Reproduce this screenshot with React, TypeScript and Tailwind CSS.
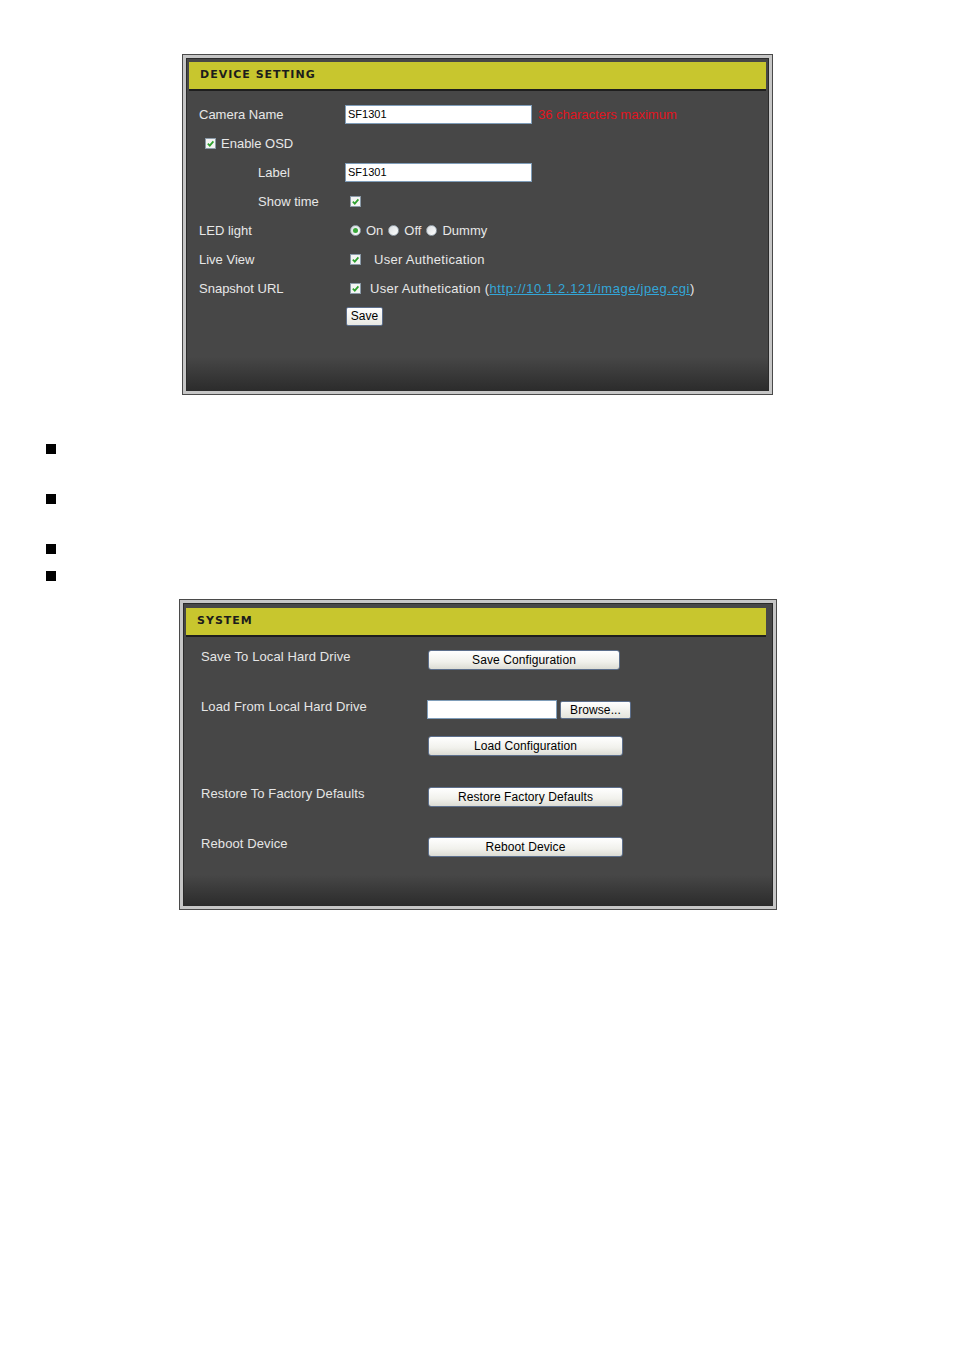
import type { ReactNode } from 'react'

// ─── Small widgets ────────────────────────────────────────────────────────────

function CheckBox() {
  return (
    <span className="inline-flex h-[11px] w-[11px] flex-none items-center justify-center border border-[#8a9aa8] bg-[#f4f4f4]">
      <svg viewBox="0 0 10 10" className="h-[9px] w-[9px]">
        <path d="M2 5.2 L4.2 7.4 L8.2 2.6" fill="none" stroke="#2ea02e" strokeWidth="1.9" />
      </svg>
    </span>
  )
}

function Radio({ on }: { on?: boolean }) {
  return (
    <span className="inline-flex h-[11px] w-[11px] flex-none items-center justify-center rounded-full border border-[#9aa6b0] bg-[linear-gradient(135deg,#d8dde0,#ffffff)]">
      {on && <span className="h-[5px] w-[5px] rounded-full bg-[#3aa83a]" />}
    </span>
  )
}

function TextBox({ value, w }: { value?: string; w: string }) {
  return (
    <div
      className={`${w} flex h-[19px] items-center border border-[#7f9db9] bg-white px-[2px] text-[11px] text-black`}
    >
      {value}
    </div>
  )
}

function XpButton({ children, w }: { children: ReactNode; w: string }) {
  return (
    <div
      className={`${w} mt-[3px] flex h-[20px] items-center justify-center rounded-[3px] border border-[#5d6f8c] bg-[linear-gradient(to_bottom,#ffffff,#f1f1ec_60%,#dcdcd4)] text-[12px] text-black`}
    >
      {children}
    </div>
  )
}

// ─── Panel frame ──────────────────────────────────────────────────────────────

function Panel({ title, children, cls, inner }: { title: string; children: ReactNode; cls: string; inner: string }) {
  return (
    <div className={`${cls} border border-[#4a4a4a] bg-[#c6c6c6] p-[3px]`}>
      <div
        className={`${inner} flex h-full flex-col border border-[#2a2a2a] bg-[linear-gradient(to_bottom,#474747_0%,#474747_90%,#2c2c2c_100%)]`}
      >
        <div className="flex h-[27px] flex-none items-center bg-[#c8c62e] pl-[11px] shadow-[0_2px_0_#1e1e1e] font-['DejaVu_Sans',sans-serif] text-[11px] font-bold tracking-[1px] text-[#1c1c1c]">
          {title}
        </div>
        {children}
      </div>
    </div>
  )
}

// ─── Device setting rows ──────────────────────────────────────────────────────

function Row({ label, indent, children }: { label?: ReactNode; indent?: boolean; children?: ReactNode }) {
  return (
    <div className="flex h-[29px] items-center">
      <div className={`w-[146px] flex-none ${indent ? 'pl-[59px]' : ''}`}>{label}</div>
      <div className="flex items-center">{children}</div>
    </div>
  )
}

export default function App() {
  return (
    <div className="min-h-[1350px] w-[954px] bg-white pt-[54px] font-['Liberation_Sans',Arial,sans-serif]">
      {/* ── Device setting ─────────────────────────────────────────────── */}
      <Panel title="DEVICE SETTING" cls="ml-[182px] h-[341px] w-[591px]" inner="pt-[3px] px-[2px]">
        <div className="pl-[10px] pt-[11px] text-[13px] text-[#e8e8e8]">
          <Row label="Camera Name">
            <TextBox value="SF1301" w="w-[187px]" />
            <span className="ml-[6px] text-[#e0141e]">36 characters maximum</span>
          </Row>
          <div className="flex h-[29px] items-center pl-[6px]">
            <CheckBox />
            <span className="ml-[5px]">Enable OSD</span>
          </div>
          <Row label="Label" indent>
            <TextBox value="SF1301" w="w-[187px]" />
          </Row>
          <Row label="Show time" indent>
            <span className="ml-[5px]">
              <CheckBox />
            </span>
          </Row>
          <Row label="LED light">
            <span className="ml-[5px] flex items-center gap-[5px]">
              <Radio on />
              <span>On</span>
              <Radio />
              <span>Off</span>
              <Radio />
              <span>Dummy</span>
            </span>
          </Row>
          <Row label="Live View">
            <span className="ml-[5px]">
              <CheckBox />
            </span>
            <span className="ml-[13px] tracking-[0.3px]">User Authetication</span>
          </Row>
          <Row label="Snapshot URL">
            <span className="ml-[5px]">
              <CheckBox />
            </span>
            <span className="ml-[9px] tracking-[0.3px]">
              User Authetication (
              <span className="tracking-[0.6px] text-[#33a6d8] underline">http://10.1.2.121/image/jpeg.cgi</span>)
            </span>
          </Row>
          <div className="flex h-[26px] items-center pl-[147px]">
            <div className="flex h-[19px] w-[37px] items-center justify-center rounded-[2px] border border-[#5d6f8c] bg-[linear-gradient(to_bottom,#ffffff,#e8e8e2)] text-[12px] text-black">
              Save
            </div>
          </div>
        </div>
      </Panel>

      {/* ── Bullets ────────────────────────────────────────────────────── */}
      <div className="ml-[46px] mt-[49px] flex flex-col">
        <span className="h-[10px] w-[10px] bg-black" />
        <span className="mt-[40px] h-[10px] w-[10px] bg-black" />
        <span className="mt-[40px] h-[10px] w-[10px] bg-black" />
        <span className="mt-[17px] h-[10px] w-[10px] bg-black" />
      </div>

      {/* ── System ─────────────────────────────────────────────────────── */}
      <Panel title="SYSTEM" cls="ml-[179px] mt-[18px] h-[311px] w-[598px]" inner="pt-[4px] pl-[2px] pr-[6px]">
        <div className="pl-[15px] pt-[12px] text-[13px] tracking-[0.1px] text-[#e6e6e6]">
          <div className="flex items-start">
            <div className="w-[227px] flex-none">Save To Local Hard Drive</div>
            <XpButton w="w-[192px]">Save Configuration</XpButton>
          </div>
          <div className="mt-[27px] flex items-start">
            <div className="w-[226px] flex-none">Load From Local Hard Drive</div>
            <div className="mt-[3px] flex items-center">
              <TextBox w="w-[130px]" />
              <div className="ml-[3px] flex h-[18px] w-[71px] items-center justify-center rounded-[2px] border border-[#5d6f8c] bg-[linear-gradient(to_bottom,#ffffff,#e4e4dc)] text-[12px] text-black">
                Browse...
              </div>
            </div>
          </div>
          <div className="ml-[227px] mt-[17px]">
            <XpButton w="w-[195px]">Load Configuration</XpButton>
          </div>
          <div className="mt-[28px] flex items-start">
            <div className="w-[227px] flex-none">Restore To Factory Defaults</div>
            <XpButton w="w-[195px]">Restore Factory Defaults</XpButton>
          </div>
          <div className="mt-[27px] flex items-start">
            <div className="w-[227px] flex-none">Reboot Device</div>
            <XpButton w="w-[195px]">Reboot Device</XpButton>
          </div>
        </div>
      </Panel>
    </div>
  )
}
